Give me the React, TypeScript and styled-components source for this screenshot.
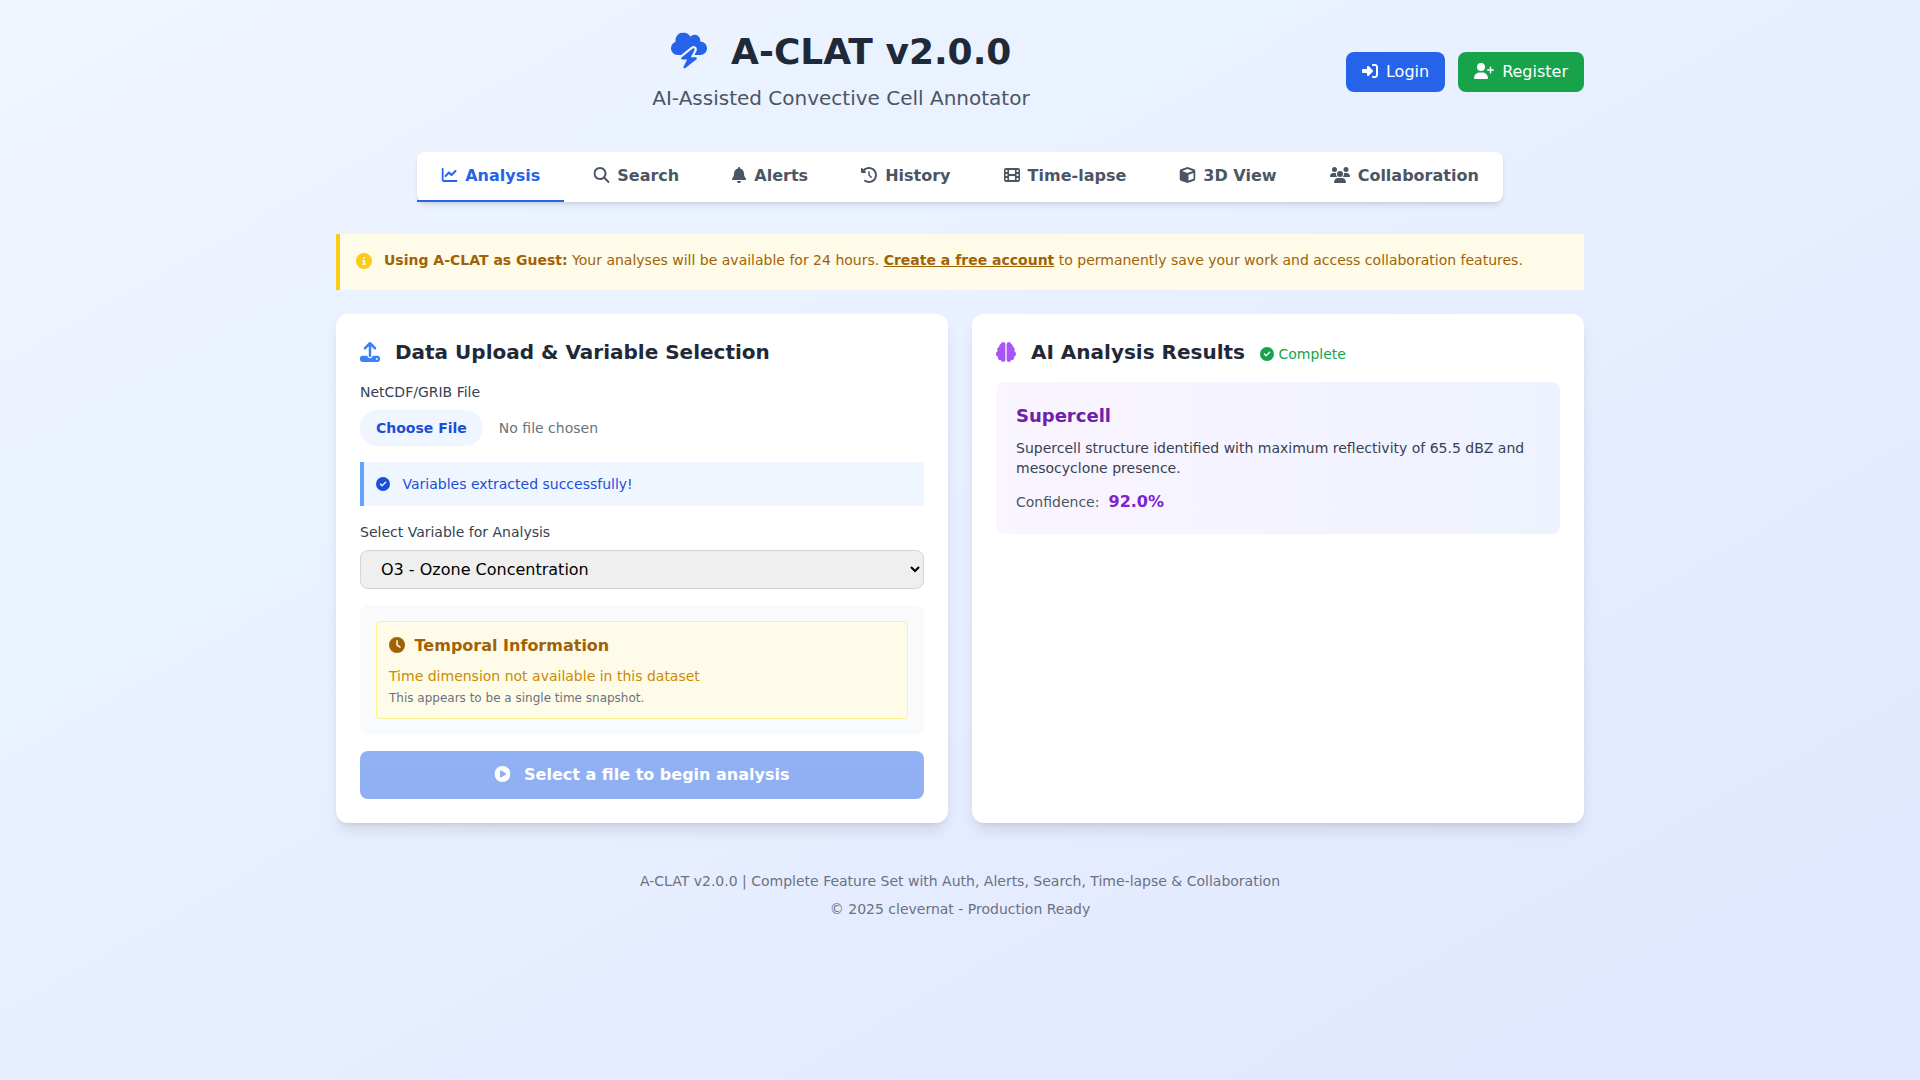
import React from "react";
import styled, { createGlobalStyle } from "styled-components";
import {
  FaBell, FaBrain, FaChartLine, FaCircleCheck, FaCircleInfo, FaCirclePlay, FaClock,
  FaClockRotateLeft, FaCloudBolt, FaCube, FaFilm, FaMagnifyingGlass, FaRightToBracket,
  FaUpload, FaUserPlus, FaUsers,
} from "react-icons/fa6";

const GlobalStyle = createGlobalStyle`
  *, *::before, *::after { box-sizing: border-box; }
  html { line-height: 1.5; }
  body {
    margin: 0;
    min-height: 100vh;
    font-family: "DejaVu Sans", sans-serif;
    font-size: 16px;
    color: #000;
    background: linear-gradient(to bottom right, #eff6ff, #e0e7ff);
  }
  h1, h2, h3, h4, p { margin: 0; }
  button, input, select { font: inherit; }
`;

const Icon = styled.span<{ $w?: number; $mr?: number; $color?: string; $dx?: number; $dy?: number }>`
  display: inline-block;
  flex: none;
  width: ${(p) => p.$w ?? 1}em;
  height: 1em;
  line-height: 1;
  margin-right: ${(p) => p.$mr ?? 0}px;
  color: ${(p) => p.$color ?? "inherit"};
  vertical-align: -0.125em;
  svg {
    display: block;
    width: 100%;
    height: 100%;
    transform: translate(${(p) => p.$dx ?? 0}px, ${(p) => p.$dy ?? 0}px);
  }
`;

const Page = styled.div`
  max-width: 1280px;
  margin: 0 auto;
  padding: 32px 16px;
`;

const Header = styled.header`
  display: flex;
  align-items: center;
  justify-content: space-between;
  margin-bottom: 40px;
  height: 80px;
`;

const Brand = styled.div`
  flex: 1;
  text-align: center;
`;

const Title = styled.h1`
  font-size: 36px;
  line-height: 40px;
  font-weight: 700;
  color: #1f2937;
  margin-bottom: 12px;
`;

const Subtitle = styled.p`
  font-size: 20px;
  line-height: 28px;
  color: #4b5563;
`;

const AuthButtons = styled.div`
  display: flex;
  gap: 13px;
`;

const AuthButton = styled.button<{ $bg: string }>`
  border: 0;
  border-radius: 8px;
  height: 40px;
  padding: 8px 16px;
  line-height: 24px;
  color: #fff;
  background: ${(p) => p.$bg};
`;

const TabBar = styled.nav`
  display: flex;
  gap: 5.09px;
  width: max-content;
  margin: 0 auto 32px;
  background: #fff;
  border-radius: 8px;
  box-shadow: 0 4px 6px -1px rgba(0, 0, 0, 0.1), 0 2px 4px -2px rgba(0, 0, 0, 0.1);
`;

const Tab = styled.button<{ $active?: boolean }>`
  border: 0;
  border-bottom: 2px solid ${(p) => (p.$active ? "#2563eb" : "transparent")};
  padding: 12px 24px;
  height: 50px;
  line-height: 24px;
  font-weight: 600;
  background: none;
  color: ${(p) => (p.$active ? "#2563eb" : "#4b5563")};
`;

const GuestBanner = styled.div`
  display: flex;
  padding: 16px;
  height: 56px;
  margin-bottom: 24px;
  background: #fefce8;
  border-left: 4px solid #facc15;
`;

const BannerIcon = styled.div`
  flex: none;
  line-height: 24px;
  color: #facc15;
`;

const BannerText = styled.p`
  margin-left: 12px;
  font-size: 14px;
  line-height: 20px;
  color: #a16207;
  strong { font-weight: 700; }
  a { color: inherit; font-weight: 600; text-decoration: underline; }
`;

const Columns = styled.main`
  display: grid;
  grid-template-columns: 1fr 1fr;
  gap: 24px;
`;

const Card = styled.section`
  padding: 24px;
  background: #fff;
  border-radius: 12px;
  box-shadow: 0 10px 15px -3px rgba(0, 0, 0, 0.1), 0 4px 6px -4px rgba(0, 0, 0, 0.1);
`;

const CardTitle = styled.h2`
  margin-bottom: 16px;
  font-size: 20px;
  line-height: 28px;
  height: 28px;
  font-weight: 600;
  color: #1f2937;
`;

const Status = styled.span`
  margin-left: 8px;
  font-size: 14px;
  line-height: 20px;
  font-weight: 400;
  color: #16a34a;
`;

const Label = styled.label`
  display: block;
  margin-bottom: 8px;
  font-size: 14px;
  line-height: 20px;
  color: #374151;
`;

const FileInput = styled.input`
  display: block;
  width: 100%;
  height: 36px;
  margin-bottom: 16px;
  font-size: 14px;
  line-height: 20px;
  color: #6b7280;
  &::file-selector-button {
    margin: 0 16px 0 0;
    padding: 8px 16px;
    border: 0;
    border-radius: 9999px;
    font: inherit;
    font-weight: 600;
    color: #1d4ed8;
    background: #eff6ff;
  }
`;

const Notice = styled.div`
  padding: 12px;
  margin-bottom: 16px;
  font-size: 14px;
  line-height: 20px;
  height: 44px;
  color: #1d4ed8;
  background: #eff6ff;
  border-left: 4px solid #60a5fa;
`;

const Select = styled.select`
  display: block;
  width: 100%;
  height: 39px;
  padding: 8px 16px;
  margin-bottom: 16px;
  color: #000;
  background-color: #efefef;
  border: 1px solid #d1d5db;
  border-radius: 8px;
`;

const InfoPanel = styled.div`
  padding: 16px;
  margin-bottom: 16px;
  background: #f9fafb;
  border-radius: 8px;
`;

const TemporalBox = styled.div`
  padding: 12px;
  background: #fefce8;
  border: 1px solid #fef08a;
  border-radius: 4px;
`;

const TemporalTitle = styled.h4`
  margin-bottom: 8px;
  font-size: 16px;
  line-height: 24px;
  height: 24px;
  font-weight: 600;
  color: #a16207;
`;

const TemporalText = styled.p`
  font-size: 14px;
  line-height: 20px;
  color: #ca8a04;
`;

const TemporalHint = styled.p`
  margin-top: 4px;
  font-size: 12px;
  line-height: 16px;
  color: #6b7280;
`;

const AnalyzeButton = styled.button`
  display: block;
  width: 100%;
  height: 48px;
  border: 0;
  border-radius: 8px;
  padding: 12px;
  line-height: 24px;
  font-weight: 600;
  color: #fff;
  background: #2563eb;
  opacity: 0.5;
`;

const ResultBox = styled.div`
  padding: 20px;
  background: linear-gradient(to right, #faf5ff, #eef2ff);
  border-radius: 8px;
`;

const ResultTitle = styled.h3`
  margin-bottom: 8px;
  font-size: 18px;
  line-height: 28px;
  font-weight: 700;
  color: #6b21a8;
`;

const ResultText = styled.p`
  margin-bottom: 12px;
  font-size: 14px;
  line-height: 20px;
  color: #374151;
`;

const Confidence = styled.div`
  display: flex;
  align-items: center;
  height: 24px;
`;

const ConfidenceLabel = styled.span`
  margin-right: 9.09px;
  font-size: 14px;
  color: #4b5563;
`;

const ConfidenceValue = styled.span`
  font-weight: 700;
  color: #7e22ce;
`;

const Footer = styled.footer`
  margin-top: 48px;
  text-align: center;
  font-size: 14px;
  line-height: 20px;
  color: #6b7280;
  p + p { margin-top: 8px; }
`;

const tabs = [
  { label: "Analysis", icon: <FaChartLine />, w: 1, dx: 0.5 },
  { label: "Search", icon: <FaMagnifyingGlass />, w: 1, dx: 0.5 },
  { label: "Alerts", icon: <FaBell />, w: 0.875, dx: 0 },
  { label: "History", icon: <FaClockRotateLeft />, w: 1, dx: 0 },
  { label: "Time-lapse", icon: <FaFilm />, w: 1, dx: 0 },
  { label: "3D View", icon: <FaCube />, w: 1, dx: 0.5 },
  { label: "Collaboration", icon: <FaUsers />, w: 1.25, dx: 0 },
];

export default function App() {
  return (
    <>
      <GlobalStyle />
      <Page>
        <Header>
          <Brand>
            <Title>
              <Icon $mr={12} $dy={-0.5} $color="#2563eb"><FaCloudBolt /></Icon> A-CLAT v2.0.0
            </Title>
            <Subtitle>AI-Assisted Convective Cell Annotator</Subtitle>
          </Brand>
          <AuthButtons>
            <AuthButton $bg="#2563eb"><Icon $mr={8}><FaRightToBracket /></Icon>Login</AuthButton>
            <AuthButton $bg="#16a34a"><Icon $w={1.25} $mr={8}><FaUserPlus /></Icon>Register</AuthButton>
          </AuthButtons>
        </Header>

        <TabBar>
          {tabs.map((t, i) => (
            <Tab key={t.label} $active={i === 0}>
              <Icon $w={t.w} $mr={8} $dx={t.dx}>{t.icon}</Icon>{t.label}
            </Tab>
          ))}
        </TabBar>

        <GuestBanner>
          <BannerIcon><Icon><FaCircleInfo /></Icon></BannerIcon>
          <BannerText>
            <strong>Using A-CLAT as Guest:</strong> Your analyses will be available for 24 hours.{" "}
            <a>Create a free account</a> to permanently save your work and access collaboration features.
          </BannerText>
        </GuestBanner>

        <Columns>
          <Card>
            <CardTitle>
              <Icon $mr={8} $color="#3b82f6"><FaUpload /></Icon> Data Upload &amp; Variable Selection
            </CardTitle>
            <Label>NetCDF/GRIB File</Label>
            <FileInput type="file" />
            <Notice><Icon $mr={8}><FaCircleCheck /></Icon> Variables extracted successfully!</Notice>
            <Label>Select Variable for Analysis</Label>
            <Select defaultValue="O3">
              <option value="O3">O3 - Ozone Concentration</option>
            </Select>
            <InfoPanel>
              <TemporalBox>
                <TemporalTitle><Icon $mr={4}><FaClock /></Icon> Temporal Information</TemporalTitle>
                <TemporalText>Time dimension not available in this dataset</TemporalText>
                <TemporalHint>This appears to be a single time snapshot.</TemporalHint>
              </TemporalBox>
            </InfoPanel>
            <AnalyzeButton disabled>
              <Icon $mr={8} $dx={-0.5}><FaCirclePlay /></Icon> Select a file to begin analysis
            </AnalyzeButton>
          </Card>

          <Card>
            <CardTitle>
              <Icon $mr={8} $color="#a855f7"><FaBrain /></Icon> AI Analysis Results{" "}
              <Status><Icon><FaCircleCheck /></Icon> Complete</Status>
            </CardTitle>
            <ResultBox>
              <ResultTitle>Supercell</ResultTitle>
              <ResultText>
                Supercell structure identified with maximum reflectivity of 65.5 dBZ and mesocyclone presence.
              </ResultText>
              <Confidence>
                <ConfidenceLabel>Confidence:</ConfidenceLabel>
                <ConfidenceValue>92.0%</ConfidenceValue>
              </Confidence>
            </ResultBox>
          </Card>
        </Columns>

        <Footer>
          <p>A-CLAT v2.0.0 | Complete Feature Set with Auth, Alerts, Search, Time-lapse &amp; Collaboration</p>
          <p>© 2025 clevernat - Production Ready</p>
        </Footer>
      </Page>
    </>
  );
}
